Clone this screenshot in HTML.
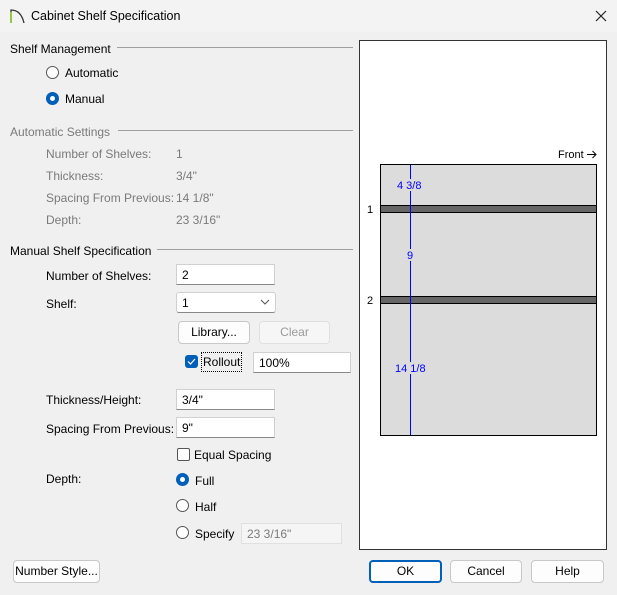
<!DOCTYPE html><html><head><style>
body{margin:0;width:617px;height:595px;background:#f0f0f0;font-family:"Liberation Sans",sans-serif;font-size:12px;color:#000;position:relative;overflow:hidden}
.a{position:absolute;white-space:nowrap}
.g{color:#7a7a7a}
.hr{position:absolute;height:1px;background:#a0a0a0}
.in{position:absolute;background:#fff;border:1px solid #d0d0d0;border-bottom:1px solid #888;box-sizing:border-box;height:21px;padding:3px 5px;font-size:12px}
.rad{position:absolute;width:11px;height:11px;border:1px solid #555;border-radius:50%;background:#fff}
.rad.on{width:13px;height:13px;border:none;background:#005fb8}
.rad.on::after{content:"";position:absolute;left:4px;top:4px;width:5px;height:5px;border-radius:50%;background:#fff}
.btn{position:absolute;box-sizing:border-box;height:23px;border:1px solid #c8c8c8;border-radius:4px;background:#fdfdfd;text-align:center;line-height:21px}
</style></head><body>
<div class="a" style="left:0;top:0;width:617px;height:32px;background:#f3f3f3"></div>
<svg class="a" style="left:8px;top:7px" width="18" height="18"><path d="M3 16V3Q13 3 16 16" fill="none" stroke="#333" stroke-width="1.3"/><path d="M3 16V5" stroke="#8c0" stroke-width="1.3"/></svg>
<div class="a" style="left:31px;top:9px;font-size:12.5px">Cabinet Shelf Specification</div>
<svg class="a" style="left:595px;top:10px" width="12" height="12"><path d="M1 1L11 11M11 1L1 11" stroke="#222" stroke-width="1.2"/></svg>

<div class="a" style="left:10px;top:42px">Shelf Management</div><div class="hr" style="left:117px;top:47px;width:236px"></div>
<div class="rad" style="left:46px;top:66px"></div><div class="a" style="left:65px;top:66px">Automatic</div>
<div class="rad on" style="left:46px;top:92px"></div><div class="a" style="left:65px;top:92px">Manual</div>

<div class="a g" style="left:10px;top:125px">Automatic Settings</div><div class="hr" style="left:118px;top:130px;width:235px"></div>
<div class="a g" style="left:46px;top:147px">Number of Shelves:</div><div class="a g" style="left:176px;top:147px">1</div>
<div class="a g" style="left:46px;top:169px">Thickness:</div><div class="a g" style="left:176px;top:169px">3/4"</div>
<div class="a g" style="left:46px;top:191px">Spacing From Previous:</div><div class="a g" style="left:176px;top:191px">14 1/8"</div>
<div class="a g" style="left:46px;top:213px">Depth:</div><div class="a g" style="left:176px;top:213px">23 3/16"</div>

<div class="a" style="left:10px;top:244px">Manual Shelf Specification</div><div class="hr" style="left:157px;top:249px;width:196px"></div>
<div class="a" style="left:46px;top:269px">Number of Shelves:</div><div class="in" style="left:176px;top:264px;width:99px">2</div>
<div class="a" style="left:46px;top:297px">Shelf:</div><div class="in" style="left:176px;top:292px;width:100px;border-radius:3px">1<svg style="position:absolute;right:5px;top:6px" width="10" height="6"><path d="M1 1L5 5L9 1" fill="none" stroke="#555"/></svg></div>
<div class="btn" style="left:178px;top:321px;width:72px">Library...</div>
<div class="btn" style="left:259px;top:321px;width:71px;color:#9a9a9a;background:#f6f6f6;border-color:#e0e0e0">Clear</div>
<div class="a" style="left:185px;top:355px;width:13px;height:13px;background:#005fb8;border-radius:3px"><svg width="13" height="13"><path d="M3 6.5L5.5 9L10 4" fill="none" stroke="#fff" stroke-width="1.2"/></svg></div>
<div class="a" style="left:201px;top:352px;border:1px dotted #000;padding:2px 1px;">Rollout</div>
<div class="in" style="left:253px;top:352px;width:98px">100%</div>
<div class="a" style="left:46px;top:393px">Thickness/Height:</div><div class="in" style="left:176px;top:389px;width:99px">3/4"</div>
<div class="a" style="left:46px;top:422px">Spacing From Previous:</div><div class="in" style="left:176px;top:417px;width:99px">9"</div>
<div class="a" style="left:177px;top:448px;width:11px;height:11px;border:1px solid #555;border-radius:2px;background:#fff"></div><div class="a" style="left:194px;top:448px">Equal Spacing</div>
<div class="a" style="left:46px;top:472px">Depth:</div>
<div class="rad on" style="left:176px;top:473px"></div><div class="a" style="left:195px;top:474px">Full</div>
<div class="rad" style="left:176px;top:499px"></div><div class="a" style="left:195px;top:500px">Half</div>
<div class="rad" style="left:176px;top:526px"></div><div class="a" style="left:195px;top:527px">Specify</div>
<div class="in g" style="left:241px;top:523px;width:101px;background:#f5f5f5;border-color:#e0e0e0">23 3/16"</div>

<div class="a" style="left:359px;top:40px;width:246px;height:508px;background:#fff;border:1px solid #333"></div>
<svg class="a" style="left:360px;top:41px" width="246" height="508">
<text x="198" y="117" font-family="Liberation Sans" font-size="11">Front</text>
<path d="M227 113.5H236M232.5 110L236 113.5L232.5 117" fill="none" stroke="#000"/>
<rect x="20.5" y="123.5" width="216" height="271" fill="#dcdcdc" stroke="#000"/>
<rect x="20.5" y="164.5" width="216" height="7" fill="#666" stroke="#000"/>
<rect x="20.5" y="255.5" width="216" height="7" fill="#666" stroke="#000"/>
<line x1="50.5" y1="124" x2="50.5" y2="394" stroke="#0000ff"/>
<rect x="36" y="138" width="30" height="12" fill="#dcdcdc"/><text x="37" y="148" fill="#0000ff" font-family="Liberation Sans" font-size="11">4 3/8</text>
<rect x="45" y="208" width="12" height="12" fill="#dcdcdc"/><text x="47" y="218" fill="#0000ff" font-family="Liberation Sans" font-size="11">9</text>
<rect x="34" y="321" width="34" height="12" fill="#dcdcdc"/><text x="35" y="331" fill="#0000ff" font-family="Liberation Sans" font-size="11">14 1/8</text>
<text x="7" y="172" font-family="Liberation Sans" font-size="11">1</text>
<text x="7" y="263" font-family="Liberation Sans" font-size="11">2</text>
</svg>

<div class="btn" style="left:13px;top:560px;width:87px">Number Style...</div>
<div class="btn" style="left:369px;top:560px;width:73px;border:2px solid #005fb8;line-height:19px">OK</div>
<div class="btn" style="left:450px;top:560px;width:72px">Cancel</div>
<div class="btn" style="left:531px;top:560px;width:73px">Help</div>
</body></html>
